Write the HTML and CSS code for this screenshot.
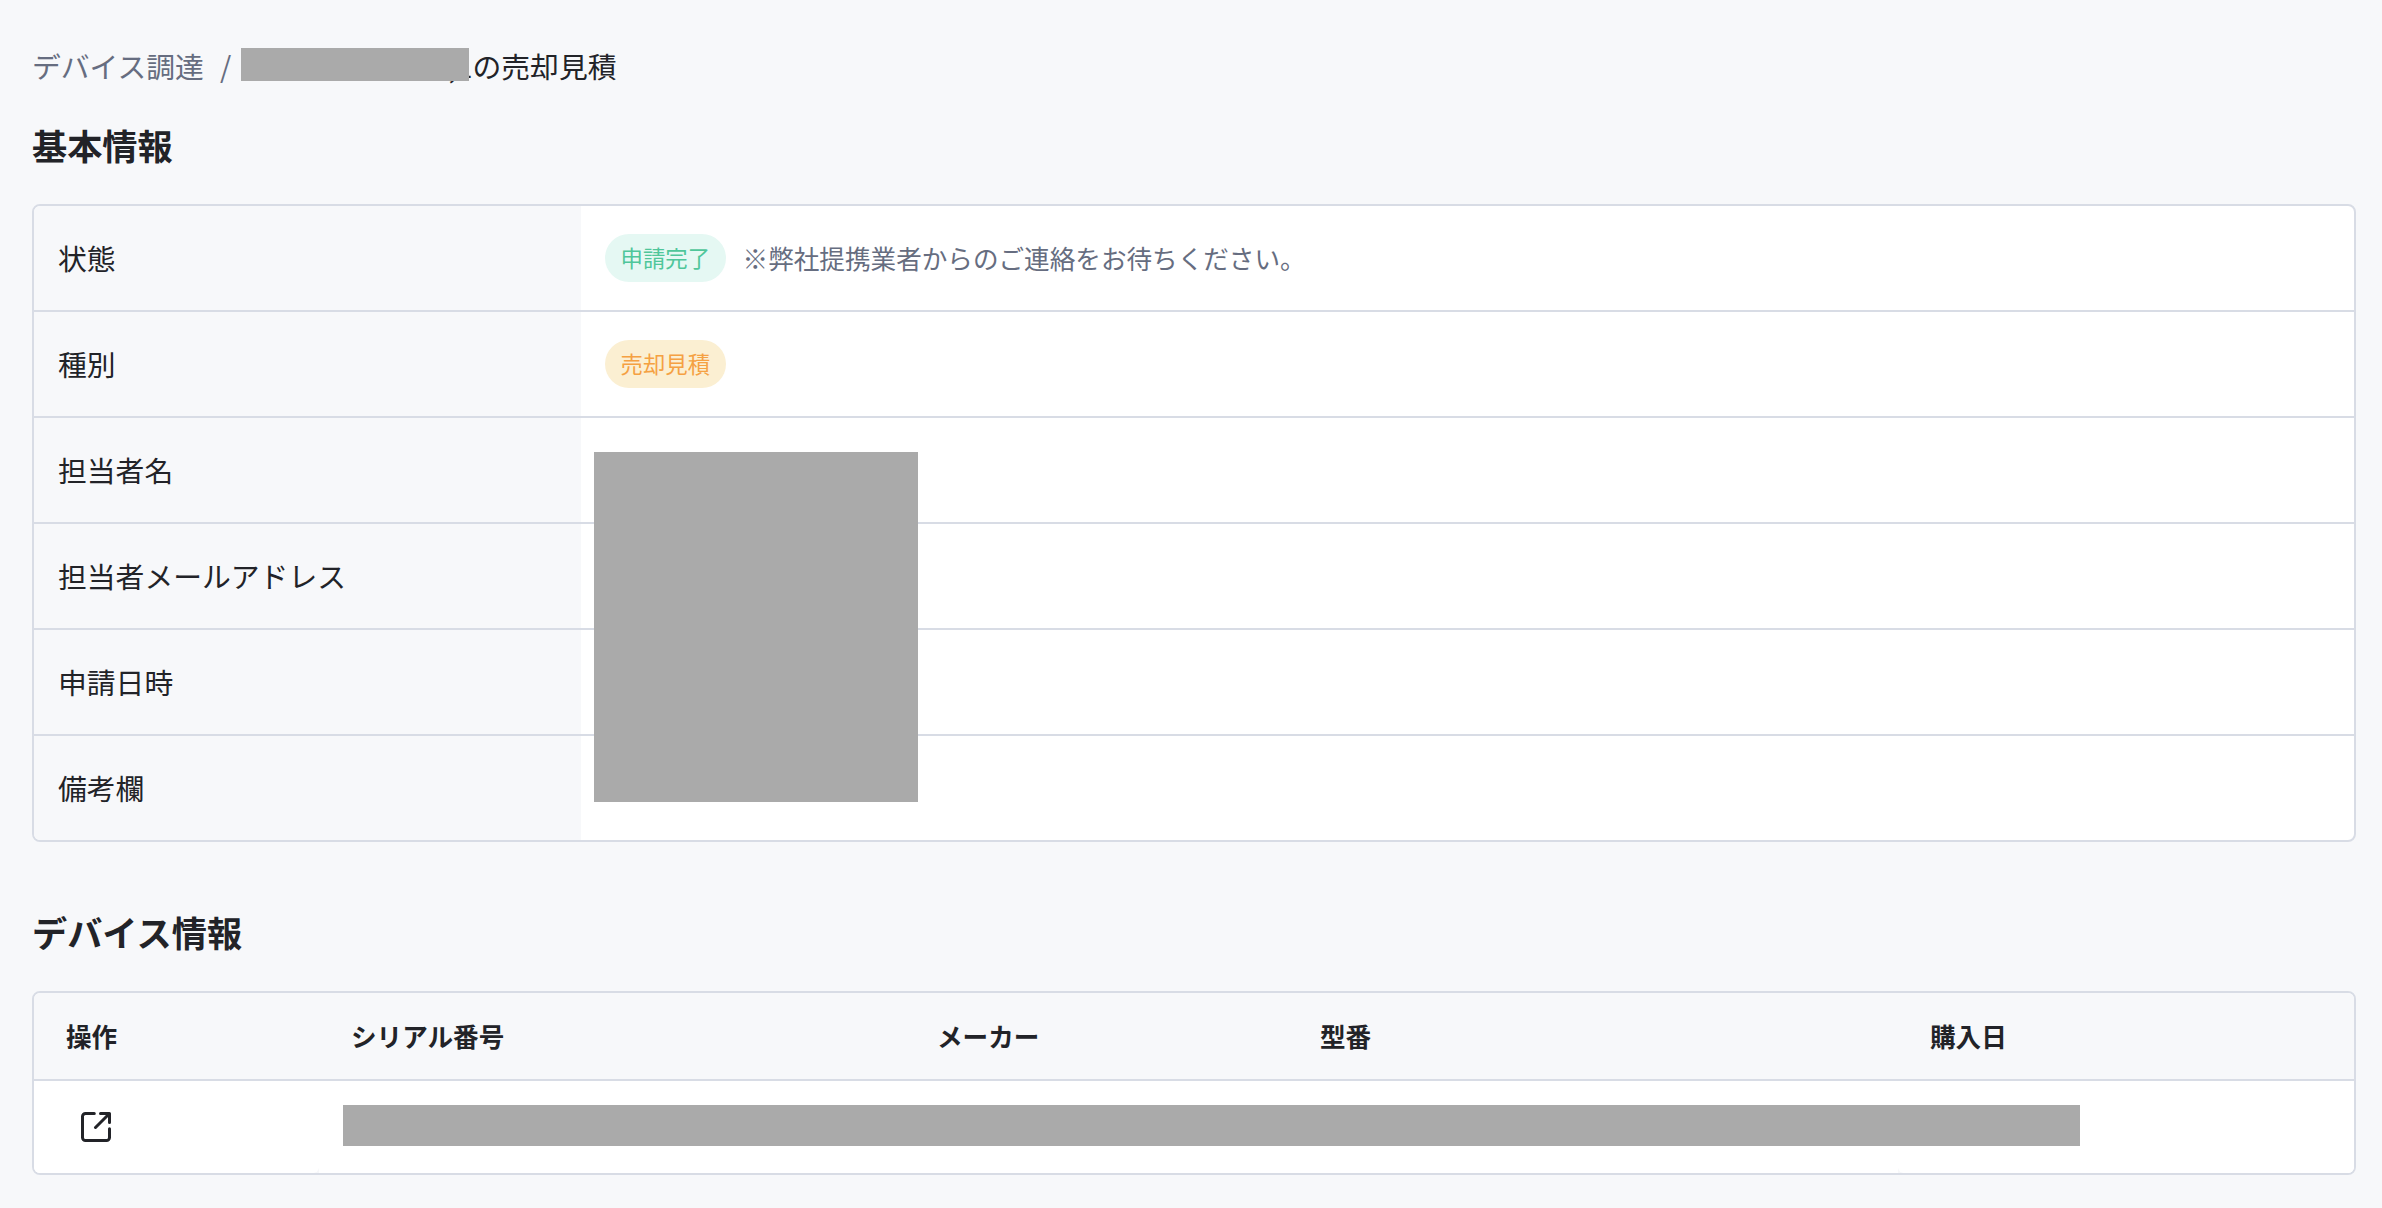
FILE: index.html
```html
<!DOCTYPE html>
<html lang="ja">
<head>
<meta charset="utf-8">
<title>売却見積</title>
<link rel="stylesheet" href="styles.css">
</head>
<body>
<main class="page">
  <nav class="breadcrumb">
    <a class="crumb-link">デバイス調達</a>
    <span class="crumb-sep">/</span>
    <span class="crumb-current"><span class="crumb-name">,1<span class="mask mask-name"></span></span>の売却見積</span>
  </nav>

  <h2 class="section-title">基本情報</h2>
  <div class="info-wrap">
    <dl class="info">
      <div class="info-row"><dt>状態</dt><dd><span class="badge badge-done">申請完了</span><span class="note">※弊社提携業者からのご連絡をお待ちください。</span></dd></div>
      <div class="info-row"><dt>種別</dt><dd><span class="badge badge-sale">売却見積</span></dd></div>
      <div class="info-row"><dt>担当者名</dt><dd></dd></div>
      <div class="info-row"><dt>担当者メールアドレス</dt><dd></dd></div>
      <div class="info-row"><dt>申請日時</dt><dd></dd></div>
      <div class="info-row"><dt>備考欄</dt><dd></dd></div>
    </dl>
    <span class="mask mask-contact"></span>
  </div>

  <h2 class="section-title">デバイス情報</h2>
  <div class="devices">
    <div class="device-row device-head">
      <div class="cell">操作</div>
      <div class="cell">シリアル番号</div>
      <div class="cell">メーカー</div>
      <div class="cell">型番</div>
      <div class="cell">購入日</div>
    </div>
    <div class="device-row device-body">
      <div class="cell cell-action">
        <svg class="icon" viewBox="0 0 30 30" fill="none" stroke="currentColor" stroke-width="3" stroke-linecap="round" stroke-linejoin="round">
          <path d="M13.3 1.5H4.5a3 3 0 0 0-3 3v21a3 3 0 0 0 3 3h21a3 3 0 0 0 3-3v-8.8"/>
          <path d="M19.5 1.5h9v9M28 2L14.5 15.5"/>
        </svg>
      </div>
      <div class="cell cell-data"><span class="mask mask-device"></span></div>
      <div class="cell cell-date"></div>
    </div>
  </div>
</main>
</body>
</html>
```

FILE: styles.css
```css
* { box-sizing: border-box; }

body {
  margin: 0;
  background: #f7f8fa;
  color: #222328;
  font-family: "Noto Sans CJK JP", sans-serif;
  font-size: 28.8px;
  line-height: 42px;
}

.page { padding: 45px 26px 0 32px; }

.mask { display: block; background: #aaa; }

.breadcrumb {
  display: flex;
  height: 43px;
  white-space: nowrap;
}
.crumb-link { color: #666d80; }
.crumb-sep { width: 36.6px; padding-left: 16px; color: #666d80; }
.crumb-current { display: flex; }
.crumb-name {
  position: relative;
  width: 232px;
  text-align: right;
}
.mask-name {
  position: absolute;
  top: 3px;
  left: 0;
  width: 228px;
  height: 33px;
}

.section-title {
  margin: 31px 0 33px;
  font-size: 35.2px;
  font-weight: 700;
  line-height: 52px;
}

.info-wrap { position: relative; margin-bottom: 64px; }
.info {
  margin: 0;
  border: 2px solid #d8dce5;
  border-radius: 8px;
  background: #fff;
  overflow: hidden;
}
.info-row { display: flex; height: 106px; border-bottom: 2px solid #d8dce5; }
.info-row:last-child { height: 104px; border-bottom: 0; }
.info dt {
  display: flex;
  align-items: center;
  width: 547px;
  padding-left: 24px;
  background: #f7f8fa;
}
.info dd {
  display: flex;
  align-items: center;
  gap: 17px;
  margin: 0;
  padding-left: 24px;
}
.badge {
  height: 48px;
  padding: 0 15.5px;
  border-radius: 24px;
  font-size: 22.4px;
  line-height: 47px;
}
.badge-done { background: #e5f8f3; color: #4fc69a; }
.badge-sale { background: #fbefd2; color: #f5a142; }
.note { color: #666d80; font-size: 25.6px; }

.mask-contact {
  position: absolute;
  top: 248px;
  left: 562px;
  width: 324px;
  height: 350px;
}

.devices {
  border: 2px solid #d8dce5;
  border-radius: 8px;
  background: #fff;
  overflow: hidden;
}
.device-row {
  display: grid;
  grid-template-columns: 285px 586px 383px 610px 1fr;
}
.device-head {
  height: 88px;
  border-bottom: 2px solid #d8dce5;
  background: #f7f8fa;
  font-size: 25.6px;
  font-weight: 700;
}
.device-head .cell { display: flex; align-items: center; padding-left: 32px; }
.device-body { height: 92px; background: #f7f8fa; }
.device-body .cell { background: #fff; }
.cell-action { padding: 31px 0 0 47px; border-bottom-right-radius: 6px; }
.cell-data { grid-column: 2 / 5; padding: 24px 0 0 24px; }
.cell-date { border-bottom-left-radius: 6px; }
.icon { display: block; width: 30px; height: 30px; }
.mask-device { position: relative; width: 1737px; height: 41px; }
```
